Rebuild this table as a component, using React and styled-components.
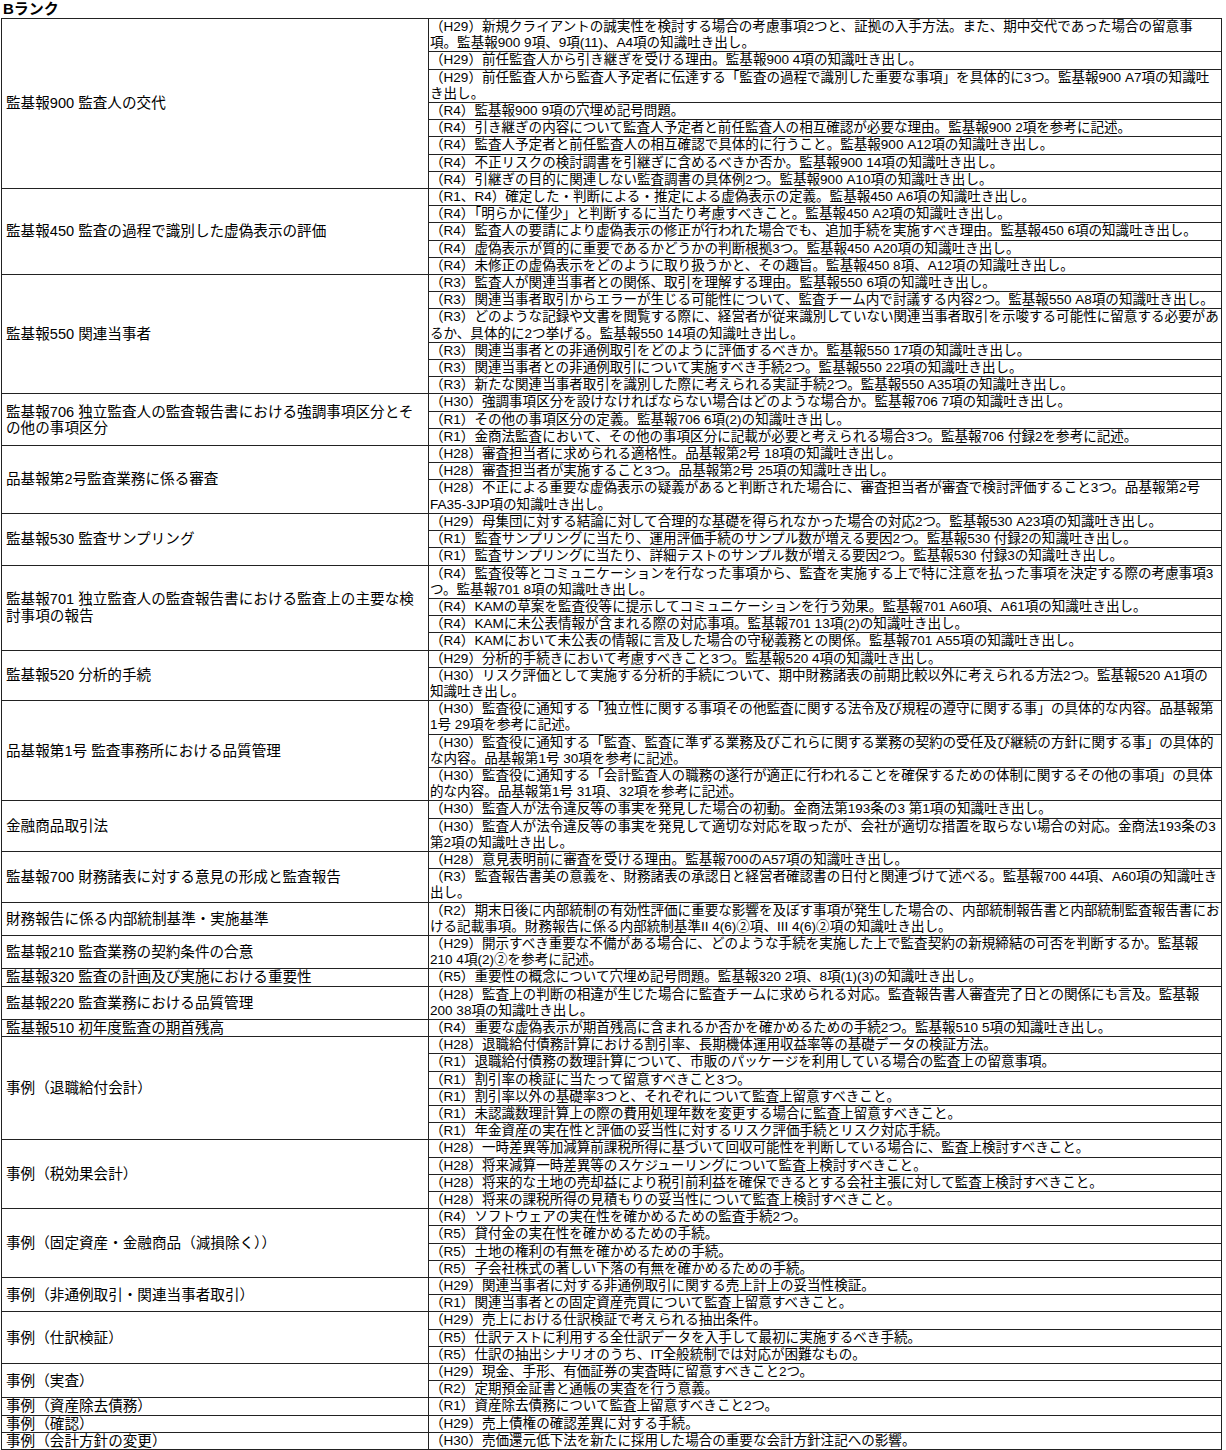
import * as React from "react";
import styled, { createGlobalStyle } from "styled-components";

const groups = [
  {
    label: "監基報900 監査人の交代",
    items: [
      ["H29", "新規クライアントの誠実性を検討する場合の考慮事項2つと、証拠の入手方法。また、期中交代であった場合の留意事\n項。監基報900 9項、9項(11)、A4項の知識吐き出し。"],
      ["H29", "前任監査人から引き継ぎを受ける理由。監基報900 4項の知識吐き出し。"],
      ["H29", "前任監査人から監査人予定者に伝達する「監査の過程で識別した重要な事項」を具体的に3つ。監基報900 A7項の知識吐\nき出し。"],
      ["R4", "監基報900 9項の穴埋め記号問題。"],
      ["R4", "引き継ぎの内容について監査人予定者と前任監査人の相互確認が必要な理由。監基報900 2項を参考に記述。"],
      ["R4", "監査人予定者と前任監査人の相互確認で具体的に行うこと。監基報900 A12項の知識吐き出し。"],
      ["R4", "不正リスクの検討調書を引継ぎに含めるべきか否か。監基報900 14項の知識吐き出し。"],
      ["R4", "引継ぎの目的に関連しない監査調書の具体例2つ。監基報900 A10項の知識吐き出し。"],
    ],
  },
  {
    label: "監基報450 監査の過程で識別した虚偽表示の評価",
    items: [
      ["R1、R4", "確定した・判断による・推定による虚偽表示の定義。監基報450 A6項の知識吐き出し。"],
      ["R4", "「明らかに僅少」と判断するに当たり考慮すべきこと。監基報450 A2項の知識吐き出し。"],
      ["R4", "監査人の要請により虚偽表示の修正が行われた場合でも、追加手続を実施すべき理由。監基報450 6項の知識吐き出し。"],
      ["R4", "虚偽表示が質的に重要であるかどうかの判断根拠3つ。監基報450 A20項の知識吐き出し。"],
      ["R4", "未修正の虚偽表示をどのように取り扱うかと、その趣旨。監基報450 8項、A12項の知識吐き出し。"],
    ],
  },
  {
    label: "監基報550 関連当事者",
    items: [
      ["R3", "監査人が関連当事者との関係、取引を理解する理由。監基報550 6項の知識吐き出し。"],
      ["R3", "関連当事者取引からエラーが生じる可能性について、監査チーム内で討議する内容2つ。監基報550 A8項の知識吐き出し。"],
      ["R3", "どのような記録や文書を閲覧する際に、経営者が従来識別していない関連当事者取引を示唆する可能性に留意する必要があ\nるか、具体的に2つ挙げる。監基報550 14項の知識吐き出し。"],
      ["R3", "関連当事者との非通例取引をどのように評価するべきか。監基報550 17項の知識吐き出し。"],
      ["R3", "関連当事者との非通例取引について実施すべき手続2つ。監基報550 22項の知識吐き出し。"],
      ["R3", "新たな関連当事者取引を識別した際に考えられる実証手続2つ。監基報550 A35項の知識吐き出し。"],
    ],
  },
  {
    label: "監基報706 独立監査人の監査報告書における強調事項区分とそ\nの他の事項区分",
    items: [
      ["H30", "強調事項区分を設けなければならない場合はどのような場合か。監基報706 7項の知識吐き出し。"],
      ["R1", "その他の事項区分の定義。監基報706 6項(2)の知識吐き出し。"],
      ["R1", "金商法監査において、その他の事項区分に記載が必要と考えられる場合3つ。監基報706 付録2を参考に記述。"],
    ],
  },
  {
    label: "品基報第2号監査業務に係る審査",
    items: [
      ["H28", "審査担当者に求められる適格性。品基報第2号 18項の知識吐き出し。"],
      ["H28", "審査担当者が実施すること3つ。品基報第2号 25項の知識吐き出し。"],
      ["H28", "不正による重要な虚偽表示の疑義があると判断された場合に、審査担当者が審査で検討評価すること3つ。品基報第2号\nFA35-3JP項の知識吐き出し。"],
    ],
  },
  {
    label: "監基報530 監査サンプリング",
    items: [
      ["H29", "母集団に対する結論に対して合理的な基礎を得られなかった場合の対応2つ。監基報530 A23項の知識吐き出し。"],
      ["R1", "監査サンプリングに当たり、運用評価手続のサンプル数が増える要因2つ。監基報530 付録2の知識吐き出し。"],
      ["R1", "監査サンプリングに当たり、詳細テストのサンプル数が増える要因2つ。監基報530 付録3の知識吐き出し。"],
    ],
  },
  {
    label: "監基報701 独立監査人の監査報告書における監査上の主要な検\n討事項の報告",
    items: [
      ["R4", "監査役等とコミュニケーションを行なった事項から、監査を実施する上で特に注意を払った事項を決定する際の考慮事項3\nつ。監基報701 8項の知識吐き出し。"],
      ["R4", "KAMの草案を監査役等に提示してコミュニケーションを行う効果。監基報701 A60項、A61項の知識吐き出し。"],
      ["R4", "KAMに未公表情報が含まれる際の対応事項。監基報701 13項(2)の知識吐き出し。"],
      ["R4", "KAMにおいて未公表の情報に言及した場合の守秘義務との関係。監基報701 A55項の知識吐き出し。"],
    ],
  },
  {
    label: "監基報520 分析的手続",
    items: [
      ["H29", "分析的手続きにおいて考慮すべきこと3つ。監基報520 4項の知識吐き出し。"],
      ["H30", "リスク評価として実施する分析的手続について、期中財務諸表の前期比較以外に考えられる方法2つ。監基報520 A1項の\n知識吐き出し。"],
    ],
  },
  {
    label: "品基報第1号 監査事務所における品質管理",
    items: [
      ["H30", "監査役に通知する「独立性に関する事項その他監査に関する法令及び規程の遵守に関する事」の具体的な内容。品基報第\n1号 29項を参考に記述。"],
      ["H30", "監査役に通知する「監査、監査に準ずる業務及びこれらに関する業務の契約の受任及び継続の方針に関する事」の具体的\nな内容。品基報第1号 30項を参考に記述。"],
      ["H30", "監査役に通知する「会計監査人の職務の遂行が適正に行われることを確保するための体制に関するその他の事項」の具体\n的な内容。品基報第1号 31項、32項を参考に記述。"],
    ],
  },
  {
    label: "金融商品取引法",
    items: [
      ["H30", "監査人が法令違反等の事実を発見した場合の初動。金商法第193条の3 第1項の知識吐き出し。"],
      ["H30", "監査人が法令違反等の事実を発見して適切な対応を取ったが、会社が適切な措置を取らない場合の対応。金商法193条の3\n第2項の知識吐き出し。"],
    ],
  },
  {
    label: "監基報700 財務諸表に対する意見の形成と監査報告",
    items: [
      ["H28", "意見表明前に審査を受ける理由。監基報700のA57項の知識吐き出し。"],
      ["R3", "監査報告書美の意義を、財務諸表の承認日と経営者確認書の日付と関連づけて述べる。監基報700 44項、A60項の知識吐き\n出し。"],
    ],
  },
  {
    label: "財務報告に係る内部統制基準・実施基準",
    items: [
      ["R2", "期末日後に内部統制の有効性評価に重要な影響を及ぼす事項が発生した場合の、内部統制報告書と内部統制監査報告書にお\nける記載事項。財務報告に係る内部統制基準II 4(6)②項、III 4(6)②項の知識吐き出し。"],
    ],
  },
  {
    label: "監基報210 監査業務の契約条件の合意",
    items: [
      ["H29", "開示すべき重要な不備がある場合に、どのような手続を実施した上で監査契約の新規締結の可否を判断するか。監基報\n210 4項(2)②を参考に記述。"],
    ],
  },
  {
    label: "監基報320 監査の計画及び実施における重要性",
    items: [["R5", "重要性の概念について穴埋め記号問題。監基報320 2項、8項(1)(3)の知識吐き出し。"]],
  },
  {
    label: "監基報220 監査業務における品質管理",
    items: [
      ["H28", "監査上の判断の相違が生じた場合に監査チームに求められる対応。監査報告書人審査完了日との関係にも言及。監基報\n200 38項の知識吐き出し。"],
    ],
  },
  {
    label: "監基報510 初年度監査の期首残高",
    items: [["R4", "重要な虚偽表示が期首残高に含まれるか否かを確かめるための手続2つ。監基報510 5項の知識吐き出し。"]],
  },
  {
    label: "事例（退職給付会計）",
    items: [
      ["H28", "退職給付債務計算における割引率、長期機体運用収益率等の基礎データの検証方法。"],
      ["R1", "退職給付債務の数理計算について、市販のパッケージを利用している場合の監査上の留意事項。"],
      ["R1", "割引率の検証に当たって留意すべきこと3つ。"],
      ["R1", "割引率以外の基礎率3つと、それぞれについて監査上留意すべきこと。"],
      ["R1", "未認識数理計算上の際の費用処理年数を変更する場合に監査上留意すべきこと。"],
      ["R1", "年金資産の実在性と評価の妥当性に対するリスク評価手続とリスク対応手続。"],
    ],
  },
  {
    label: "事例（税効果会計）",
    items: [
      ["H28", "一時差異等加減算前課税所得に基づいて回収可能性を判断している場合に、監査上検討すべきこと。"],
      ["H28", "将来減算一時差異等のスケジューリングについて監査上検討すべきこと。"],
      ["H28", "将来的な土地の売却益により税引前利益を確保できるとする会社主張に対して監査上検討すべきこと。"],
      ["H28", "将来の課税所得の見積もりの妥当性について監査上検討すべきこと。"],
    ],
  },
  {
    label: "事例（固定資産・金融商品（減損除く））",
    items: [
      ["R4", "ソフトウェアの実在性を確かめるための監査手続2つ。"],
      ["R5", "貸付金の実在性を確かめるための手続。"],
      ["R5", "土地の権利の有無を確かめるための手続。"],
      ["R5", "子会社株式の著しい下落の有無を確かめるための手続。"],
    ],
  },
  {
    label: "事例（非通例取引・関連当事者取引）",
    items: [
      ["H29", "関連当事者に対する非通例取引に関する売上計上の妥当性検証。"],
      ["R1", "関連当事者との固定資産売買について監査上留意すべきこと。"],
    ],
  },
  {
    label: "事例（仕訳検証）",
    items: [
      ["H29", "売上における仕訳検証で考えられる抽出条件。"],
      ["R5", "仕訳テストに利用する全仕訳データを入手して最初に実施するべき手続。"],
      ["R5", "仕訳の抽出シナリオのうち、IT全般統制では対応が困難なもの。"],
    ],
  },
  {
    label: "事例（実査）",
    items: [
      ["H29", "現金、手形、有価証券の実査時に留意すべきこと2つ。"],
      ["R2", "定期預金証書と通帳の実査を行う意義。"],
    ],
  },
  { label: "事例（資産除去債務）", items: [["R1", "資産除去債務について監査上留意すべきこと2つ。"]] },
  { label: "事例（確認）", items: [["H29", "売上債権の確認差異に対する手続。"]] },
  { label: "事例（会計方針の変更）", items: [["H30", "売価還元低下法を新たに採用した場合の重要な会計方針注記への影響。"]] },
];

function App() {
  return (
    <Page>
      <GlobalStyle />
      <Title>Bランク</Title>
      <RankTable>
        <colgroup>
          <col style={{ width: "427px" }} />
          <col />
        </colgroup>
        <tbody>
          {groups.map((group, gi) =>
            group.items.map(([year, text], ii) => (
              <tr key={gi + "-" + ii}>
                {ii === 0 && <TopicCell rowSpan={group.items.length}>{group.label}</TopicCell>}
                <QuestionCell>{"（" + year + "）" + text}</QuestionCell>
              </tr>
            ))
          )}
        </tbody>
      </RankTable>
    </Page>
  );
}

const GlobalStyle = createGlobalStyle`
  body {
    margin: 0;
    background: #fff;
    color: #000;
    font-family: "Liberation Sans", "Noto Sans CJK JP", sans-serif;
  }
`;

const Page = styled.div`
  padding: 0 4px 0 1px;
`;

const Title = styled.div`
  font-size: 15px;
  font-weight: 700;
  line-height: 18px;
  padding-left: 2px;
`;

const RankTable = styled.table`
  width: 1221px;
  border-collapse: collapse;
  table-layout: fixed;
  line-height: 16.2px;
`;

const Cell = styled.td`
  border: 1px solid #222;
  padding: 0 1px;
  white-space: pre;
  overflow: hidden;
`;

const TopicCell = styled(Cell)`
  vertical-align: middle;
  padding-left: 4px;
  font-size: 14.6px;
`;

const QuestionCell = styled(Cell)`
  vertical-align: top;
  font-size: 13.55px;
`;

export default App;
